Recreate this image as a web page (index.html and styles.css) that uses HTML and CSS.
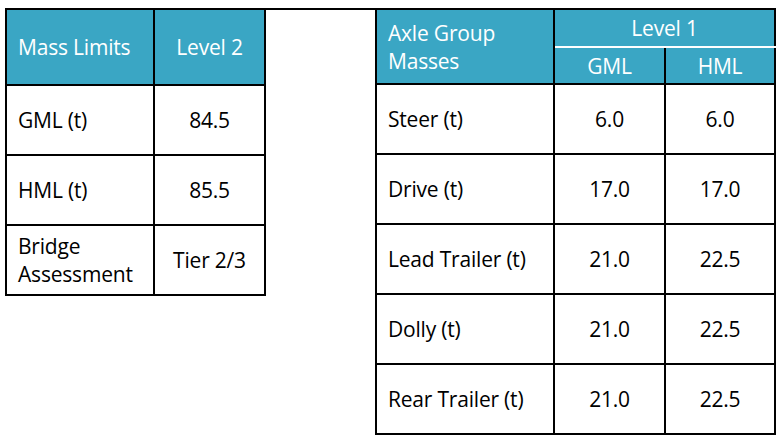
FILE: index.html
```html
<!DOCTYPE html>
<html>
<head>
<meta charset="utf-8">
<link rel="stylesheet" href="styles.css">
</head>
<body>
<div class="sheet">
  <table class="tbl tbl-left">
    <colgroup><col class="c-name-l"><col class="c-val"></colgroup>
    <thead>
      <tr class="hrow"><th class="name">Mass Limits</th><th>Level 2</th></tr>
    </thead>
    <tbody>
      <tr><td class="name">GML (t)</td><td>84.5</td></tr>
      <tr><td class="name">HML (t)</td><td>85.5</td></tr>
      <tr><td class="name">Bridge<br>Assessment</td><td>Tier 2/3</td></tr>
    </tbody>
  </table>
  <div class="gap"></div>
  <table class="tbl tbl-right">
    <colgroup><col class="c-name-r"><col class="c-val"><col class="c-val2"></colgroup>
    <thead>
      <tr class="hrow1"><th class="name" rowspan="2">Axle Group<br>Masses</th><th class="grp" colspan="2">Level 1</th></tr>
      <tr class="hrow2"><th class="sub">GML</th><th class="sub">HML</th></tr>
    </thead>
    <tbody>
      <tr><td class="name">Steer (t)</td><td>6.0</td><td>6.0</td></tr>
      <tr><td class="name">Drive (t)</td><td>17.0</td><td>17.0</td></tr>
      <tr><td class="name">Lead Trailer (t)</td><td>21.0</td><td>22.5</td></tr>
      <tr><td class="name">Dolly (t)</td><td>21.0</td><td>22.5</td></tr>
      <tr><td class="name">Rear Trailer (t)</td><td>21.0</td><td>22.5</td></tr>
    </tbody>
  </table>
</div>
</body>
</html>
```

FILE: styles.css
```css
html, body {
  margin: 0;
  padding: 0;
  background: #ffffff;
}

body {
  font-family: "Open Sans", "Noto Sans", sans-serif;
  font-size: 21px;
  color: #000000;
}

.sheet {
  display: flex;
  align-items: flex-start;
  margin: 8px 0 0 5px;
  width: 771px;
  border-top: 2px solid #000;
}

.gap {
  flex: 1;
}

.tbl {
  border-collapse: collapse;
  table-layout: fixed;
  border-top: none;
}

.tbl-left { width: 259px; }
.tbl-right { width: 400px; }

.c-name-l { width: 148px; }
.c-name-r { width: 178px; }
.c-val { width: 111px; }
.c-val2 { width: 110px; }

.tbl th,
.tbl td {
  border: 2px solid #000;
  padding: 0 11px;
  text-align: center;
  vertical-align: middle;
  line-height: 28px;
  font-weight: normal;
  letter-spacing: -0.2px;
}

.tbl thead th {
  border-top: none;
  background: #3aa6c4;
  color: #ffffff;
}

.tbl .name {
  text-align: left;
}

.hrow th { height: 74px; }
.tbl tbody td { height: 68px; }

.hrow1 th.grp {
  height: 36px;
  border-bottom: 2px solid #ffffff;
}

.hrow2 th.sub {
  height: 35px;
  border-top: 2px solid #ffffff;
}
```
